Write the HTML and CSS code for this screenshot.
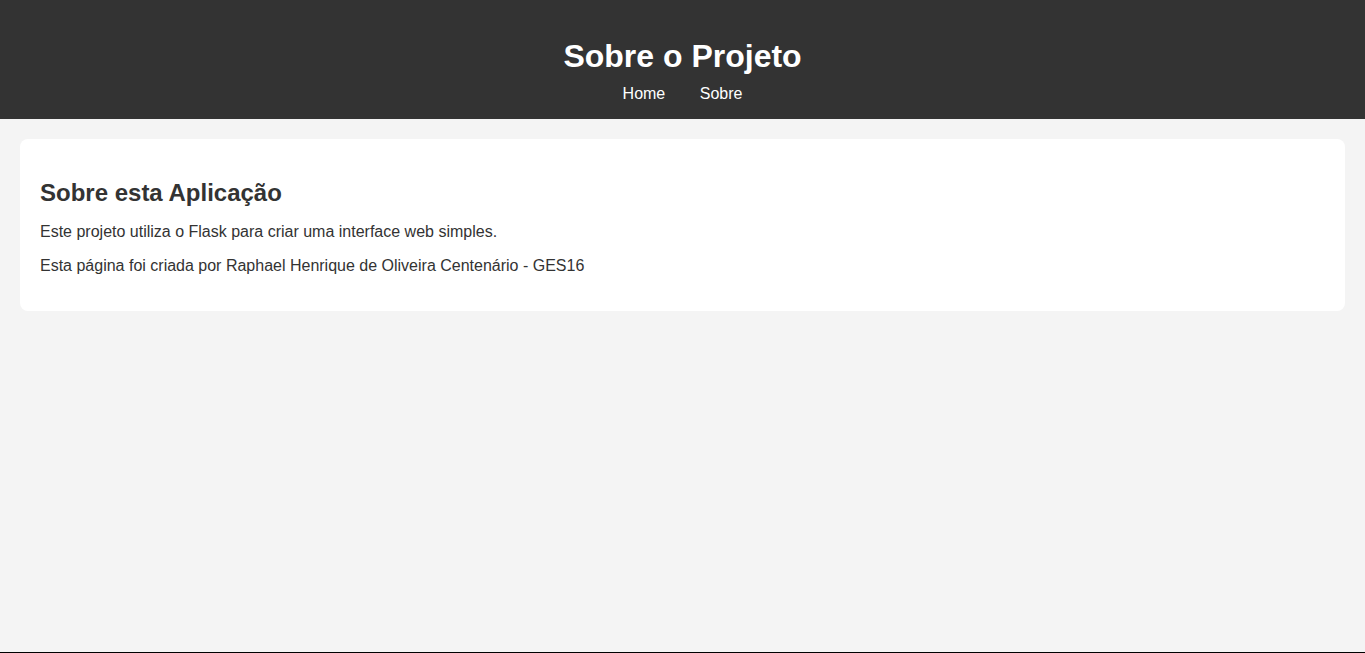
FILE: index.html
```html
<!DOCTYPE html>
<html lang="pt-BR">
<head>
<meta charset="utf-8">
<title>Sobre o Projeto</title>
<link rel="stylesheet" href="styles.css">
</head>
<body>
<header class="site-header">
  <h1 class="site-title">Sobre o Projeto</h1>
  <nav class="site-nav">
    <a href="#" class="nav-link">Home</a>
    <a href="#" class="nav-link">Sobre</a>
  </nav>
</header>
<main class="content">
  <section class="card">
    <h2 class="card-title">Sobre esta Aplicação</h2>
    <p class="card-text">Este projeto utiliza o Flask para criar uma interface web simples.</p>
    <p class="card-text">Esta página foi criada por Raphael Henrique de Oliveira Centenário - GES16</p>
  </section>
</main>
</body>
</html>
```
FILE: styles.css
```css
html, body {
  margin: 0;
  padding: 0;
}
body {
  font-family: "Liberation Sans", Arial, sans-serif;
  background: #f4f4f4;
  color: #333;
  min-height: 100vh;
  box-sizing: border-box;
  border-bottom: 1px solid #000;
}
.site-header {
  background: #333;
  color: #fff;
  text-align: center;
  padding: 17px 0 16px;
}
.site-title {
  font-size: 32px;
  margin: 21px 0 10px;
  line-height: 37px;
}
.site-nav {
  line-height: 18px;
  font-size: 16px;
}
.nav-link {
  color: #fff;
  text-decoration: none;
  margin: 0 15px;
}
.content {
  padding: 20px;
}
.card {
  background: #fff;
  border-radius: 8px;
  padding: 20px;
}
.card-title {
  font-size: 24px;
  margin: 20px 0 16px;
}
.card-text {
  font-size: 16px;
  margin: 16px 0;
}
```
